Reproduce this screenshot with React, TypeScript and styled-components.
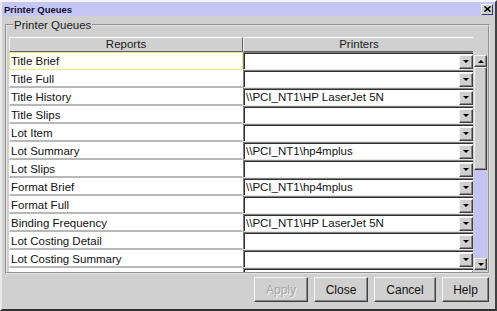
import { Fragment } from "react";
import styled, { createGlobalStyle } from "styled-components";

const GlobalStyle = createGlobalStyle`
  html, body {
    margin: 0;
    padding: 0;
    background: #d0d0d0;
  }
  body {
    font-family: "Liberation Sans", Arial, sans-serif;
    color: #000;
  }
`;

const Window = styled.div`
  width: 497px;
  height: 311px;
  box-sizing: border-box;
  background: #d0d0d0;
  border: 2px solid;
  border-color: #f4f4f4 #404040 #303030 #e8e8e8;
  display: flex;
  flex-direction: column;
  overflow: hidden;
`;

const TitleBar = styled.div`
  height: 14px;
  background: #c6c6f4;
  display: flex;
  align-items: center;
  justify-content: space-between;
  padding: 0 2px 0 2px;
`;

const TitleText = styled.span`
  font-size: 9.5px;
  font-weight: bold;
  color: #101030;
`;

const CloseButton = styled.div`
  width: 12px;
  height: 11px;
  box-sizing: border-box;
  background: #d0d0d0;
  border: 1px solid;
  border-color: #ffffff #404040 #404040 #ffffff;
  display: flex;
  align-items: center;
  justify-content: center;
`;

const GroupBox = styled.fieldset`
  margin: 2px 5px 0 3px;
  padding: 5px 1px 0 2px;
  border: 2px groove #e4e4e4;
  min-width: 0;
`;

const Legend = styled.legend`
  font-size: 11.5px;
  line-height: 14px;
  padding: 0 1px;
  margin-left: 4px;
  color: #202020;
`;

const Content = styled.div`
  display: flex;
  gap: 1px;
  height: 235px;
`;

const Table = styled.div`
  width: 466px;
  height: 235px;
  overflow: hidden;
  display: grid;
  grid-template-columns: 234px 232px;
  grid-auto-rows: 18px;
  grid-template-rows: 15px;
`;

const HeaderCell = styled.div`
  box-sizing: border-box;
  border: 1px solid;
  border-color: #ffffff #606060 #606060 #f0f0f0;
  background: #d0d0d0;
  font-size: 11.5px;
  line-height: 13px;
  text-align: center;
  color: #202020;
`;

const ReportCell = styled.div<{ $focused?: boolean }>`
  box-sizing: border-box;
  background: ${(p) => (p.$focused ? "#fffff4" : "#ffffff")};
  border: 1px solid ${(p) => (p.$focused ? "#e6e68a" : "transparent")};
  border-bottom: ${(p) => (p.$focused ? "1px solid #e6e68a" : "2px solid #b8b8b8")};
  font-size: 11.5px;
  line-height: 16px;
  padding-left: 1px;
  white-space: nowrap;
  overflow: hidden;
  color: #111;
`;

const Combo = styled.div`
  box-sizing: border-box;
  display: flex;
  align-items: center;
  background: #ffffff;
  border: 1px solid;
  border-color: #808080 #e8e8e8 #e8e8e8 #808080;
  box-shadow: inset 1px 1px 0 #303030;
  padding: 1px 1px 0 2px;
`;

const ComboText = styled.span`
  flex: 1;
  font-size: 11.5px;
  line-height: 15px;
  white-space: nowrap;
  overflow: hidden;
  color: #111;
`;

const ArrowButton = styled.div`
  width: 14px;
  height: 14px;
  box-sizing: border-box;
  background: #d0d0d0;
  border: 1px solid;
  border-color: #f4f4f4 #404040 #404040 #f4f4f4;
  box-shadow: inset -1px -1px 0 #888888;
  display: flex;
  align-items: center;
  justify-content: center;
`;

const Arrow = styled.div<{ $up?: boolean }>`
  width: 0;
  height: 0;
  border-left: 3px solid transparent;
  border-right: 3px solid transparent;
  ${(p) =>
    p.$up ? "border-bottom: 3px solid #000;" : "border-top: 3px solid #000;"}
`;

const Scrollbar = styled.div`
  width: 13px;
  margin-top: 18px;
  height: 215px;
  display: flex;
  flex-direction: column;
`;

const ScrollButton = styled(ArrowButton)`
  width: 13px;
  height: 12px;
`;

const Thumb = styled.div`
  height: 103px;
  box-sizing: border-box;
  background: #d0d0d0;
  border: 1px solid;
  border-color: #f4f4f4 #404040 #404040 #f4f4f4;
  box-shadow: inset -1px -1px 0 #888888;
`;

const Track = styled.div`
  flex: 1;
  background: #c4c4f4;
`;

const ButtonRow = styled.div`
  display: flex;
  justify-content: flex-end;
  gap: 6px;
  padding: 3px 6px 7px 0;
`;

const DialogButton = styled.button<{ $width: number }>`
  width: ${(p) => p.$width}px;
  height: 25px;
  box-sizing: border-box;
  margin: 0;
  padding: 0;
  background: #d0d0d0;
  border: 1px solid;
  border-color: #f8f8f8 #404040 #404040 #f8f8f8;
  box-shadow: inset -1px -1px 0 #888888;
  font-family: "Liberation Sans", Arial, sans-serif;
  font-size: 12px;
  color: #111;
  &:disabled {
    color: #a4a4a4;
    text-shadow: 1px 1px 0 #f4f4f4;
  }
`;

const rows: { report: string; printer: string }[] = [
  { report: "Title Brief", printer: "" },
  { report: "Title Full", printer: "" },
  { report: "Title History", printer: "\\\\PCI_NT1\\HP LaserJet 5N" },
  { report: "Title Slips", printer: "" },
  { report: "Lot Item", printer: "" },
  { report: "Lot Summary", printer: "\\\\PCI_NT1\\hp4mplus" },
  { report: "Lot Slips", printer: "" },
  { report: "Format Brief", printer: "\\\\PCI_NT1\\hp4mplus" },
  { report: "Format Full", printer: "" },
  { report: "Binding Frequency", printer: "\\\\PCI_NT1\\HP LaserJet 5N" },
  { report: "Lot Costing Detail", printer: "" },
  { report: "Lot Costing Summary", printer: "" },
  { report: "", printer: "" },
];

function App() {
  return (
    <>
      <GlobalStyle />
      <Window>
        <TitleBar>
          <TitleText>Printer Queues</TitleText>
          <CloseButton>
            <svg width="7" height="6" viewBox="0 0 7 6">
              <path d="M0.5 0.5 L6.5 5.5 M6.5 0.5 L0.5 5.5" stroke="#000" strokeWidth="1.6" />
            </svg>
          </CloseButton>
        </TitleBar>
        <GroupBox>
          <Legend>Printer Queues</Legend>
          <Content>
            <Table>
              <HeaderCell>Reports</HeaderCell>
              <HeaderCell>Printers</HeaderCell>
              {rows.map((row, i) => (
                <Fragment key={i}>
                  <ReportCell $focused={i === 0}>{row.report}</ReportCell>
                  <Combo>
                    <ComboText>{row.printer}</ComboText>
                    <ArrowButton>
                      <Arrow />
                    </ArrowButton>
                  </Combo>
                </Fragment>
              ))}
            </Table>
            <Scrollbar>
              <ScrollButton>
                <Arrow $up />
              </ScrollButton>
              <Thumb />
              <Track />
              <ScrollButton>
                <Arrow />
              </ScrollButton>
            </Scrollbar>
          </Content>
        </GroupBox>
        <ButtonRow>
          <DialogButton $width={54} disabled>
            Apply
          </DialogButton>
          <DialogButton $width={54}>Close</DialogButton>
          <DialogButton $width={62}>Cancel</DialogButton>
          <DialogButton $width={47}>Help</DialogButton>
        </ButtonRow>
      </Window>
    </>
  );
}

export default App;
